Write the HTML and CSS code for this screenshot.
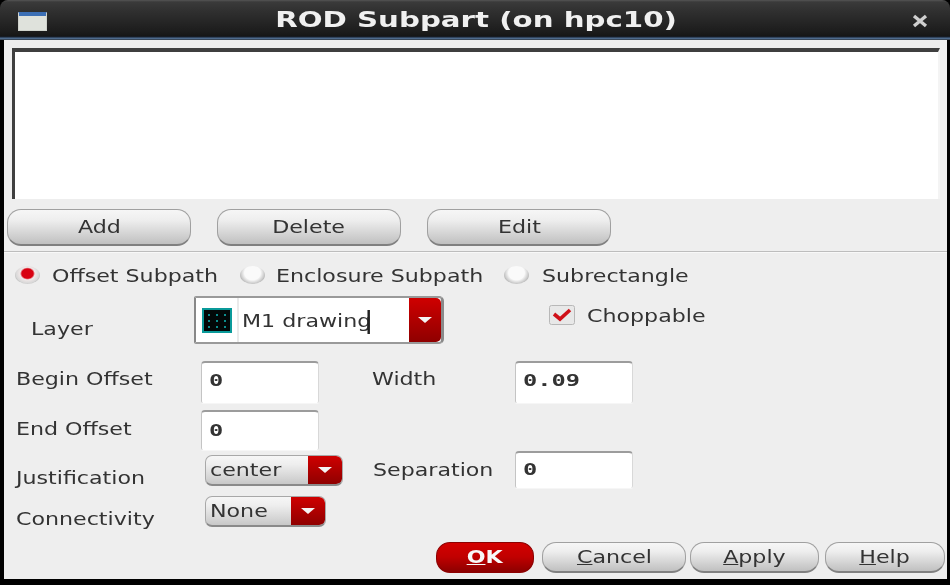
FILE: index.html
```html
<!DOCTYPE html>
<html lang="en">
<head>
<meta charset="utf-8">
<title>ROD Subpart (on hpc10)</title>
<link rel="stylesheet" href="styles.css">
</head>
<body>
<div class="window">
  <header class="titlebar">
    <span class="win-icon"></span>
    <h1 class="title">ROD Subpart (on hpc10)</h1>
    <svg class="close" width="18" height="14" viewBox="0 0 18 14"><path d="M3 2 L15 12 M15 2 L3 12" stroke="#cfcfcf" stroke-width="3.4" fill="none"/></svg>
  </header>
  <main class="body">
    <div class="listbox"></div>
    <div class="list-actions">
      <button class="btn btn-list"><span class="t">Add</span></button>
      <button class="btn btn-list"><span class="t">Delete</span></button>
      <button class="btn btn-list"><span class="t">Edit</span></button>
    </div>
    <div class="rule"></div>
    <div class="radios">
      <label class="radio-item radio-a"><span class="radio on"></span><span class="t">Offset Subpath</span></label>
      <label class="radio-item radio-b"><span class="radio"></span><span class="t">Enclosure Subpath</span></label>
      <label class="radio-item radio-c"><span class="radio"></span><span class="t">Subrectangle</span></label>
    </div>
    <div class="layer-row">
      <span class="layer-label t">Layer</span>
      <div class="layer-combo">
        <span class="swatch-cell">
          <svg width="30" height="25" viewBox="0 0 30 25"><rect x="1" y="1" width="28" height="23" fill="#020808" stroke="#0a9a9a" stroke-width="2"/><g fill="#0c8d8d"><rect x="6" y="6" width="2" height="2"/><rect x="14" y="6" width="2" height="2"/><rect x="22" y="6" width="2" height="2"/><rect x="6" y="12" width="2" height="2"/><rect x="14" y="12" width="2" height="2"/><rect x="22" y="12" width="2" height="2"/><rect x="6" y="18" width="2" height="2"/><rect x="14" y="18" width="2" height="2"/><rect x="22" y="18" width="2" height="2"/></g></svg>
        </span>
        <span class="layer-text"><span class="t">M1 drawing<span class="caret"></span></span></span>
        <span class="arrow arrow-big"><i></i></span>
      </div>
      <label class="check-item">
        <svg class="check" width="26" height="20" viewBox="0 0 26 20"><rect x="0.5" y="0.5" width="25" height="19" rx="2" fill="#e8e8e8" stroke="#b8b8b8"/><path d="M5 9 L11 14 L21 5" fill="none" stroke="#d01018" stroke-width="3.6"/></svg>
        <span class="t">Choppable</span>
      </label>
    </div>
    <div class="fields">
      <div class="col-left">
        <div class="field f-begin"><span class="f-label t">Begin Offset</span><span class="input"><span class="mono">0</span></span></div>
        <div class="field f-end"><span class="f-label t">End Offset</span><span class="input"><span class="mono">0</span></span></div>
        <div class="field f-just"><span class="f-label t">Justification</span><span class="select sel-center"><span class="sel-text"><span class="t">center</span></span><span class="arrow"><i></i></span></span></div>
        <div class="field f-conn"><span class="f-label t">Connectivity</span><span class="select sel-none"><span class="sel-text"><span class="t">None</span></span><span class="arrow"><i></i></span></span></div>
      </div>
      <div class="col-right">
        <div class="field f-width"><span class="f-label t">Width</span><span class="input"><span class="mono">0.09</span></span></div>
        <div class="field f-sep"><span class="f-label t">Separation</span><span class="input input-tall"><span class="mono">0</span></span></div>
      </div>
    </div>
    <footer class="actions">
      <button class="btn btn-ok"><span class="t"><u>O</u>K</span></button>
      <button class="btn btn-cancel"><span class="t"><u>C</u>ancel</span></button>
      <button class="btn btn-apply"><span class="t"><u>A</u>pply</span></button>
      <button class="btn btn-help"><span class="t"><u>H</u>elp</span></button>
    </footer>
  </main>
</div>
</body>
</html>
```
FILE: styles.css
```css
* { box-sizing: border-box; }
html, body { margin: 0; padding: 0; background: #000; }
.window {
  width: 950px; height: 585px; background: #000; overflow: hidden;
  display: flex; flex-direction: column;
  font-family: "DejaVu Sans", sans-serif; font-size: 18px; color: #333;
  filter: blur(0.6px);
}
.t { display: inline-block; transform: scaleX(1.23); transform-origin: left center; white-space: nowrap; }
.titlebar {
  height: 40px; flex: none; position: relative;
  display: flex; align-items: center; justify-content: center;
  padding-bottom: 1px;
  border-radius: 8px 8px 0 0;
  background: linear-gradient(#555 0, #3a3a3a 2px, #333 8px, #1e1e1e 30px, #161616 36px, #162030 37px, #4d6a8c 38px, #4d6a8c 39px, #2a2a2a 40px);
}
.win-icon {
  position: absolute; left: 18px; top: 12px; width: 29px; height: 19px;
  background: linear-gradient(#3c6fb5 0, #3c6fb5 3px, #dfe2dc 3px, #dfe2dc 100%);
  border: 1px solid #cfd2cc; border-top-color: #3c6fb5;
}
.title { margin: 0 0 0 2px; font-size: 22px; font-weight: bold; color: #f0f0f0; transform: scaleX(1.33); }
.close { position: absolute; left: 911px; top: 14px; }
.body {
  flex: 1; margin: 0 3px 6px 4px; background: #eeeeee; padding: 8px 0 0 1px;
  display: flex; flex-direction: column;
}
.listbox {
  height: 151px; flex: none; margin: 0 7px; background: #fff;
  border-top: 4px solid #3f3f3f; border-left: 3px solid #3f3f3f; border-right: 2px solid #f4f4f4;
}
.list-actions { display: flex; gap: 26px; margin: 10px 0 0 2px; }
.btn {
  font: inherit; color: #333; padding: 0 0 2px;
  border: 1px solid #a0a0a0; border-bottom: 2px solid #808080;
  background: linear-gradient(#f6f6f6, #eeeeee 30%, #c0c0c0);
}
.btn .t { transform-origin: center center; }
.btn-list { width: 184px; height: 37px; border-radius: 14px; }
.rule { height: 2px; margin: 5px 0 0 -1px; background: #bdbdbd; border-bottom: 1px solid #f8f8f8; }
.radios { display: flex; margin-top: 11px; height: 22px; align-items: center; }
.radio-item { display: flex; align-items: center; gap: 11px; white-space: nowrap; }
.radio-a { margin-left: 10px; width: 225px; gap: 12px; }
.radio-b { width: 264px; }
.radio-c { gap: 13px; }
.radio {
  display: block; width: 25px; height: 18px; border-radius: 50%; flex: none;
  background: radial-gradient(ellipse at 50% 38%, #fafafa 45%, #cfcfcf 65%, #777 100%);
}
.radio.on { background: radial-gradient(ellipse at 50% 42%, #d80010 0, #d80010 32%, #f0e8e8 42%, #d8d8d8 65%, #777 100%); }
.layer-row { display: flex; margin-top: 10px; height: 48px; position: relative; }
.layer-label { margin: 22px 0 0 26px; width: 163px; flex: none; }
.layer-combo {
  width: 250px; height: 48px; flex: none; display: flex;
  border-left: 2px solid #888; border-top: 2px solid #999; border-bottom: 2px solid #999; border-right: 3px solid #8a8a8a;
  border-radius: 2px 5px 5px 2px; background: #fff;
}
.swatch-cell { width: 43px; display: flex; align-items: center; justify-content: center; border-right: 2px solid #eaeaea; flex: none; }
.layer-text { flex: 1; display: flex; align-items: center; padding: 3px 0 0 3px; }
.caret { display: inline-block; width: 2px; height: 24px; background: #222; margin-left: -3px; vertical-align: middle; }
.arrow {
  display: flex; align-items: center; justify-content: center; flex: none;
  background: linear-gradient(#cf0000, #8f0000); width: 34px; border-radius: 0 5px 5px 0;
}
.arrow-big { width: 32px; }
.arrow i { display: block; width: 0; height: 0; border-style: solid; border-width: 6px 7px 0; border-color: #f4f4f4 transparent transparent; }
.check-item { display: flex; align-items: center; gap: 12px; margin: 8px 0 0 105px; height: 22px; }
.fields { display: flex; margin-top: 17px; height: 166px; }
.col-left { width: 367px; flex: none; display: flex; flex-direction: column; }
.col-right { flex: 1; display: flex; flex-direction: column; }
.field { display: flex; flex: none; }
.input {
  display: flex; align-items: center; padding: 0 0 2px 7px; background: #fff; width: 118px; height: 42px;
  border-top: 2px solid #9c9c9c; border-left: 1px solid #c4c4c4; border-right: 1px solid #d8d8d8;
  border-radius: 4px 4px 2px 2px; box-shadow: 0 1px 0 #f6f6f6; flex: none;
}
.f-begin .input, .f-width .input { padding-bottom: 6px; }
.input-tall { height: 37px; }
.mono { display: inline-block; font-family: "DejaVu Sans Mono", monospace; font-size: 16px; font-weight: bold; color: #333; transform: scaleX(1.48); transform-origin: left center; }
.col-left .f-label { margin-left: 11px; width: 185px; flex: none; }
.f-begin { height: 49px; }
.f-begin .f-label { margin-top: 7px; }
.f-end { height: 45px; }
.f-end .f-label { margin-top: 8px; }
.f-end .input { height: 40px; }
.f-just { height: 41px; }
.f-just .f-label { margin-top: 12px; }
.f-conn .f-label { margin-top: 12px; }
.f-width { height: 90px; }
.f-width .f-label { width: 143px; margin-top: 7px; flex: none; }
.f-sep .f-label { width: 142px; margin: 8px 0 0 1px; flex: none; }
.select {
  display: flex; height: 31px; width: 138px; margin-left: 4px; border-radius: 7px; overflow: hidden; flex: none;
  border: 1px solid #a8a8a8; border-bottom: 2px solid #8a8a8a;
  background: linear-gradient(#f6f6f6, #eeeeee 30%, #c8c8c8);
}
.sel-none { width: 121px; }
.sel-text { flex: 1; padding-left: 4px; line-height: 28px; }
.actions { position: relative; display: flex; margin-top: 15px; height: 32px; padding-left: 431px; }
.actions .btn { height: 31px; border-radius: 14px; }
.btn-ok {
  width: 98px; margin-right: 8px; background: linear-gradient(#d40000, #c00000 50%, #8f0000);
  border-color: #8d0000; color: #f8f8f8; font-weight: bold;
}
.btn-cancel { width: 144px; margin-right: 4px; }
.btn-apply { width: 129px; margin-right: 6px; }
.btn-help { width: 120px; }
```
